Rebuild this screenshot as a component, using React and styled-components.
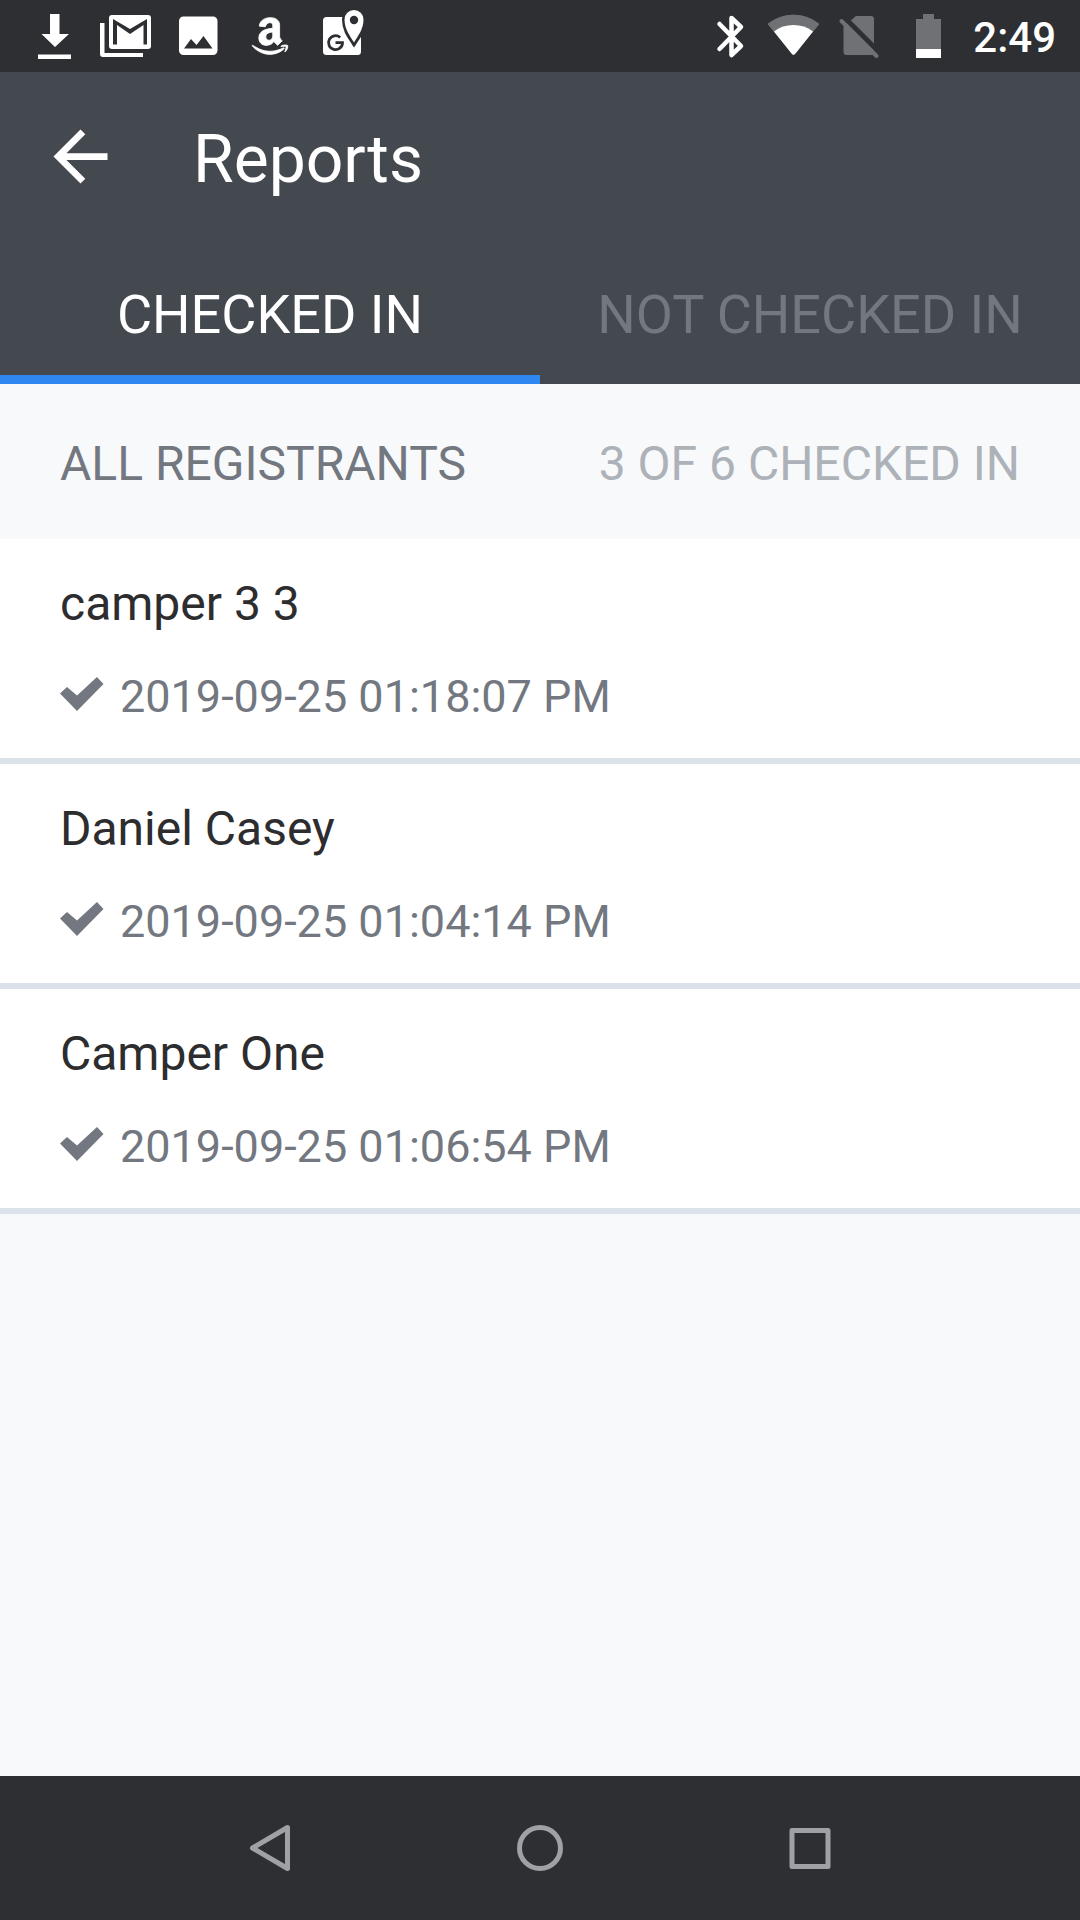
import React, { useState } from "react";
import styled, { createGlobalStyle } from "styled-components";
import { FaAmazon } from "react-icons/fa";
import { MdArrowBack } from "react-icons/md";

const color = {
  system: "#2e2f33",
  header: "#44484f",
  page: "#f7f9fb",
  divider: "#dce2ea",
  accent: "#2f88f0",
  muted: "#73777f",
  faint: "#adb2b9",
  ink: "#2d2d2f",
  dim: "#707174",
  nav: "#a0a1a4",
};

const GlobalStyle = createGlobalStyle`
  * { box-sizing: border-box; }
  body { margin: 0; font-family: Roboto, sans-serif; background: ${color.page}; }
  button { font: inherit; border: 0; margin: 0; padding: 0; background: none; color: inherit; cursor: pointer; }
  svg { display: block; overflow: visible; }
`;

const Screen = styled.div`
  display: flex;
  flex-direction: column;
  min-height: 100vh;
`;

const StatusBar = styled.div`
  display: flex;
  justify-content: space-between;
  align-items: center;
  height: 72px;
  padding: 0 24px 0 18px;
  background: ${color.system};
  color: #fff;
`;

const StatusGroup = styled.div`
  display: flex;
  align-items: center;
`;

const IconSlot = styled.span`
  display: flex;
  justify-content: center;
  align-items: center;
  width: ${(p) => p.$width}px;
  height: 72px;
`;

const Clock = styled.time`
  padding: 4px 0 0 7px;
  font-size: 42px;
  font-weight: 500;
  line-height: 48px;
`;

const Header = styled.header`
  background: ${color.header};
  color: #fff;
`;

const TitleRow = styled.div`
  display: flex;
  align-items: center;
  gap: 72px;
  height: 168px;
  padding: 0 40px;
`;

const Title = styled.h1`
  margin: 0;
  padding-top: 8px;
  font-size: 66px;
  font-weight: 400;
  line-height: 80px;
`;

const Tabs = styled.div`
  display: grid;
  grid-template-columns: 1fr 1fr;
`;

const Tab = styled.button`
  height: 144px;
  padding-top: 15px;
  border-bottom: 9px solid ${(p) => (p.$active ? color.accent : "transparent")};
  color: ${(p) => (p.$active ? "#fff" : color.muted)};
  font-size: 54px;
  line-height: 64px;
`;

const Content = styled.main`
  flex: 1;
  background: ${color.page};
`;

const Summary = styled.div`
  display: flex;
  justify-content: space-between;
  align-items: center;
  height: 155px;
  padding: 4px 60px 0;
  font-size: 48px;
  line-height: 56px;
`;

const SummaryLabel = styled.h2`
  margin: 0;
  font: inherit;
  color: ${color.muted};
`;

const SummaryCount = styled.span`
  color: ${color.faint};
`;

const List = styled.ul`
  margin: 0;
  padding: 0;
  list-style: none;
`;

const Item = styled.li`
  display: flex;
  flex-direction: column;
  gap: 37px;
  padding: 37px 60px 33px;
  background: #fff;
  border-bottom: 6px solid ${color.divider};
`;

const Name = styled.span`
  color: ${color.ink};
  font-size: 48px;
  line-height: 56px;
`;

const CheckedAt = styled.span`
  display: flex;
  align-items: center;
  gap: 16px;
  color: ${color.muted};
  font-size: 45px;
  line-height: 56px;
`;

const NavBar = styled.nav`
  display: grid;
  grid-template-columns: repeat(3, 1fr);
  height: 144px;
  padding: 0 12.5%;
  background: ${color.system};
`;

const NavButton = styled.button`
  display: flex;
  justify-content: center;
  align-items: center;
`;

const DownloadIcon = () => (
  <svg width="72" height="72" fill="#fff">
    <path d="M32 14h9.500v20h9.500L37 47 23.500 34H32zM20 54.500h33V59H20z" />
  </svg>
);

const MailIcon = () => (
  <svg width="72" height="72" fill="#fff">
    <path d="M10 23h4.500v30H53v4H13q-3 0-3-3z" />
    <rect x="19" y="15" width="42" height="34" rx="3" />
    <path d="M23 19l17 10 17-10v25.500h-3.500V25L40 34 27 25v19.500h-4z" fill={color.system} />
  </svg>
);

const PhotoIcon = () => (
  <svg width="72" height="72" fill="#fff">
    <rect x="17" y="16.500" width="38.500" height="38.500" rx="4.500" />
    <path d="M22 48.500l7-9.500 5.500 6 7-9L50.500 48.500z" fill={color.system} />
  </svg>
);

const MapsIcon = () => (
  <svg width="72" height="72" fill="#fff">
    <rect x="17" y="17" width="38" height="38" rx="3.500" />
    <path
      d="M48 43C44 37 38.500 30 38.500 20a9.500 9.500 0 0 1 19 0C57.500 30 52 37 48 43z"
      fill={color.system}
      stroke={color.system}
      strokeWidth="5"
    />
    <path d="M48 42.500C44 36 38.500 29 38.500 19.500a9.500 9.500 0 0 1 19 0C57.500 29 52 36 48 42.500z" />
    <circle cx="48" cy="20" r="4.200" fill={color.system} />
    <path
      d="M34.200 37.500a7 7 0 1 0 2.300 5.200h-7"
      fill="none"
      stroke={color.system}
      strokeWidth="2.800"
    />
  </svg>
);

const BluetoothIcon = () => (
  <svg width="64" height="72" fill="none" stroke="#fff" strokeWidth="4.500" strokeLinecap="round" strokeLinejoin="round">
    <path d="M21.500 24L43 46l-9.500 9V18L43 27 21.500 49" />
  </svg>
);

const WifiIcon = () => (
  <svg width="64" height="72">
    <path d="M31.500 55L6 24a41 41 0 0 1 51 0z" fill={color.dim} stroke={color.dim} strokeLinejoin="round" />
    <path d="M29.500 53.500L12 31.500a33 33 0 0 1 39 0L33.500 53.500q-2 2.500-4 0z" fill="#fff" />
  </svg>
);

const NoSimIcon = () => (
  <svg width="64" height="72">
    <path d="M30 16h15q3 0 3 3v33q0 3-3 3H20.500q-3 0-3-3V26.500z" fill={color.dim} />
    <path d="M18 17L54 53" stroke={color.system} strokeWidth="5" />
    <path d="M15.500 21L50.500 56" stroke={color.dim} strokeWidth="4" strokeLinecap="round" />
  </svg>
);

const BatteryIcon = () => (
  <svg width="76" height="72">
    <path d="M33 14h11v5h7v30H26V19h7z" fill={color.dim} />
    <path d="M26 49h25v9H26z" fill="#fff" />
  </svg>
);

const CheckIcon = () => (
  <svg width="44" height="40" viewBox="0 0 44 40" fill="currentColor" aria-hidden="true">
    <path d="M0 16.500L7 10l10 8.500L37 0l6.500 7L17 34z" />
  </svg>
);

const registrants = [
  { name: "camper 3 3", at: "2019-09-25 01:18:07 PM" },
  { name: "Daniel Casey", at: "2019-09-25 01:04:14 PM" },
  { name: "Camper One", at: "2019-09-25 01:06:54 PM" },
];

const tabs = ["CHECKED IN", "NOT CHECKED IN"];

export default function App() {
  const [active, setActive] = useState(0);
  return (
    <Screen>
      <GlobalStyle />
      <StatusBar>
        <StatusGroup>
          <IconSlot $width={72}><DownloadIcon /></IconSlot>
          <IconSlot $width={72}><MailIcon /></IconSlot>
          <IconSlot $width={72}><PhotoIcon /></IconSlot>
          <IconSlot $width={72}><FaAmazon size={42} strokeWidth={10} /></IconSlot>
          <IconSlot $width={72}><MapsIcon /></IconSlot>
        </StatusGroup>
        <StatusGroup>
          <IconSlot $width={64}><BluetoothIcon /></IconSlot>
          <IconSlot $width={64}><WifiIcon /></IconSlot>
          <IconSlot $width={64}><NoSimIcon /></IconSlot>
          <IconSlot $width={76}><BatteryIcon /></IconSlot>
          <Clock>2:49</Clock>
        </StatusGroup>
      </StatusBar>
      <Header>
        <TitleRow>
          <button type="button" aria-label="Back"><MdArrowBack size={81} /></button>
          <Title>Reports</Title>
        </TitleRow>
        <Tabs role="tablist">
          {tabs.map((label, i) => (
            <Tab
              key={label}
              type="button"
              role="tab"
              aria-selected={active === i}
              $active={active === i}
              onClick={() => setActive(i)}
            >
              {label}
            </Tab>
          ))}
        </Tabs>
      </Header>
      <Content>
        <Summary>
          <SummaryLabel>ALL REGISTRANTS</SummaryLabel>
          <SummaryCount>3 OF 6 CHECKED IN</SummaryCount>
        </Summary>
        <List>
          {registrants.map((r) => (
            <Item key={r.name}>
              <Name>{r.name}</Name>
              <CheckedAt>
                <CheckIcon />
                {r.at}
              </CheckedAt>
            </Item>
          ))}
        </List>
      </Content>
      <NavBar aria-label="System">
        <NavButton type="button" aria-label="Back">
          <svg width="48" height="48" fill="none" stroke={color.nav} strokeWidth="5" strokeLinejoin="round">
            <path d="M41.500 3.500v41L6.500 24z" />
          </svg>
        </NavButton>
        <NavButton type="button" aria-label="Home">
          <svg width="48" height="48" fill="none" stroke={color.nav} strokeWidth="5">
            <circle cx="24" cy="24" r="20.500" />
          </svg>
        </NavButton>
        <NavButton type="button" aria-label="Recent apps">
          <svg width="48" height="48" fill="none" stroke={color.nav} strokeWidth="5" strokeLinejoin="round">
            <rect x="6" y="6.500" width="36" height="36" />
          </svg>
        </NavButton>
      </NavBar>
    </Screen>
  );
}
